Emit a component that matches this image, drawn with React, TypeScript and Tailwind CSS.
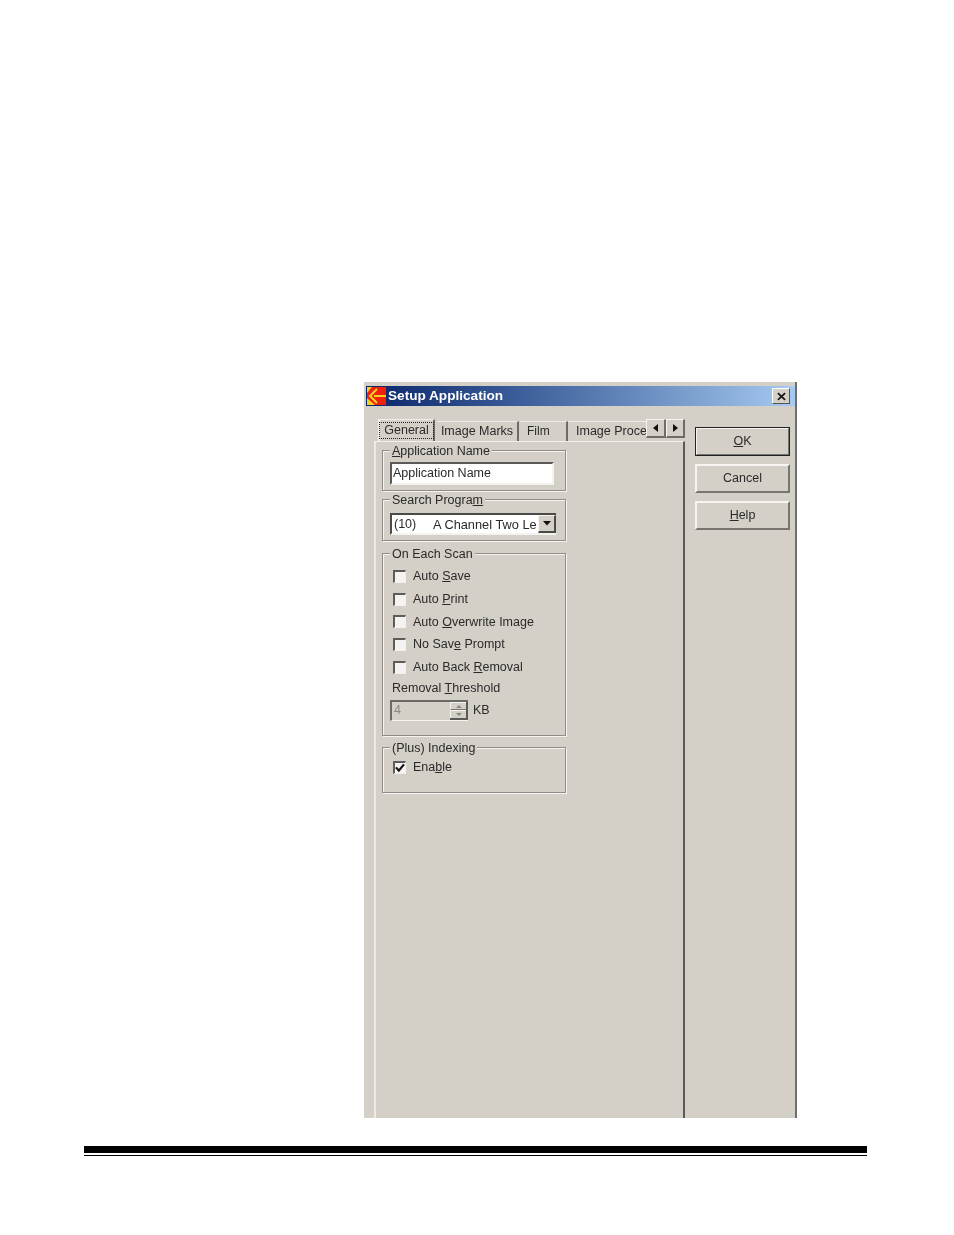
import React from "react";

const Check = ({ checked = false }: { checked?: boolean }) => (
  <span className="flex h-[13px] w-[13px] shrink-0 items-center justify-center border-t-2 border-l-2 border-t-[#5c5c5a] border-l-[#5c5c5a] border-r border-b border-r-[#f2f1ee] border-b-[#f2f1ee] bg-[#f4f3f1]">
    {checked && (
      <svg viewBox="0 0 10 10" className="h-[10px] w-[10px]">
        <path d="M1 4.4 L3.8 7.6 L9 1.4" fill="none" stroke="#111" strokeWidth="2.2" />
      </svg>
    )}
  </span>
);

const Row = ({ children, h = "h-[22.75px]" }: { children: React.ReactNode; h?: string }) => (
  <div className={`ml-[10px] flex items-center gap-[7px] ${h}`}>{children}</div>
);

const Group = ({
  title,
  className,
  children,
}: {
  title: React.ReactNode;
  className: string;
  children?: React.ReactNode;
}) => (
  <div className={`w-[184px] border border-[#8f8d88] shadow-[inset_1px_1px_0_#f4f3f0,1px_1px_0_#f4f3f0] ${className}`}>
    <div className="-mt-[8px] ml-[7px] h-[16px] w-fit bg-[#d4d0c8] px-[2px] leading-[16px] whitespace-nowrap">{title}</div>
    {children}
  </div>
);

const Btn = ({ children, className }: { children: React.ReactNode; className: string }) => (
  <div
    className={`flex h-[29px] w-[95px] items-center justify-center border-t-2 border-l-2 border-t-[#f6f5f2] border-l-[#f6f5f2] border-r-2 border-b-2 border-r-[#77756f] border-b-[#77756f] ${className}`}
  >
    <span>{children}</span>
  </div>
);

const Tab = ({ children, className }: { children: React.ReactNode; className: string }) => (
  <div className={`flex h-[20px] items-center whitespace-nowrap border-t border-t-[#ecebe7] border-r-2 border-r-[#6d6c68] ${className}`}>
    {children}
  </div>
);

export default function App() {
  return (
    <div className="flex h-[1235px] w-[954px] flex-col overflow-hidden bg-white font-['Liberation_Sans',sans-serif] text-[12.5px] text-[#2a2a2a]">
      <div className="mt-[382px] ml-[364px] flex h-[736px] w-[433px] flex-col border-r-2 border-r-[#6e6e6c] bg-[#d4d0c8] pt-[4px] blur-[0.3px]">
        {/* title bar */}
        <div className="ml-[2px] flex h-[20px] w-[429px] items-center bg-gradient-to-r from-[#0a246a] to-[#a6caf0] pr-[5px]">
          <svg viewBox="0 0 19 18" className="ml-[1px] h-[18px] w-[19px] shrink-0">
            <rect width="19" height="18" fill="#f02010" />
            <path d="M0 0H5L0 6Z M0 18H8L0 11Z" fill="#f6d21e" />
            <path d="M10 2 L3 9 L10 16" fill="none" stroke="#f6d21e" strokeWidth="2" />
            <path d="M7 9H19" stroke="#f6d21e" strokeWidth="2" />
          </svg>
          <span className="ml-[2px] text-[13.6px] font-bold whitespace-nowrap text-white">Setup Application</span>
          <div className="ml-auto flex h-[16px] w-[18px] items-center justify-center border-t border-l border-t-white border-l-white border-r border-b border-r-[#555] border-b-[#555] bg-[#d4d0c8]">
            <svg viewBox="0 0 10 10" className="h-[9px] w-[9px]">
              <path d="M1 1.2 L9 8.8 M9 1.2 L1 8.8" stroke="#111" strokeWidth="1.8" />
            </svg>
          </div>
        </div>

        {/* body */}
        <div className="flex min-h-0 flex-1 pt-[13px] pl-[10px]">
          <div className="flex w-[311px] flex-col">
            {/* tabs */}
            <div className="flex h-[22px] items-start pl-[4px]">
              <div className="flex h-[22px] w-[57px] items-center justify-center border-t border-l-2 border-t-[#f1f0ec] border-l-[#f1f0ec] border-r-2 border-r-[#6d6c68]">
                <span className="border border-dotted border-[#222] px-[4px] leading-[15px]">General</span>
              </div>
              <Tab className="mt-[2px] ml-[2px] w-[82px] justify-center">Image Marks</Tab>
              <Tab className="mt-[2px] ml-[1px] w-[48px] pl-[7px]"><span className="-mt-[1px] text-[12px]">Film</span></Tab>
              <div className="mt-[2px] flex h-[20px] w-[78px] items-center border-t border-t-[#ecebe7] pl-[8px] whitespace-nowrap">
                Image Proce
              </div>
              <div className="flex h-[19px] w-[20px] items-center justify-center border-t border-l border-t-[#f6f5f2] border-l-[#f6f5f2] border-r-2 border-b-2 border-r-[#6d6c68] border-b-[#6d6c68]">
                <svg viewBox="0 0 5 8" className="h-[8px] w-[5px]"><path d="M5 0V8L0 4Z" fill="#111" /></svg>
              </div>
              <div className="flex h-[19px] w-[19px] items-center justify-center border-t border-l border-t-[#f6f5f2] border-l-[#f6f5f2] border-r-2 border-b-2 border-r-[#6d6c68] border-b-[#6d6c68]">
                <svg viewBox="0 0 5 8" className="h-[8px] w-[5px]"><path d="M0 0V8L5 4Z" fill="#111" /></svg>
              </div>
            </div>

            {/* pane */}
            <div className="min-h-0 flex-1 border-t border-l-2 border-t-[#f1f0ec] border-l-[#ecebe7] border-r-2 border-r-[#5a5a58] pt-[8px] pl-[6px]">
              <Group className="h-[41px]" title={<><u>A</u>pplication Name</>}>
                <div className="mt-[3px] ml-[7px] flex h-[23px] w-[164px] items-center border-t-2 border-l-2 border-t-[#5a5a58] border-l-[#5a5a58] border-r-2 border-b-2 border-r-[#f4f3f0] border-b-[#f4f3f0] bg-white pl-[1px] whitespace-nowrap">
                  Application Name
                </div>
              </Group>

              <Group className="mt-[8px] h-[42px]" title={<>Search Progra<u>m</u></>}>
                <div className="mt-[5px] ml-[7px] flex h-[22px] w-[166px] items-center border-t-2 border-l-2 border-t-[#4a4a48] border-l-[#4a4a48] border-b-2 border-b-[#f4f3f0] bg-white pl-[2px] whitespace-nowrap">
                  <span className="mt-[1px] w-[39px]">(10)</span>
                  <span className="mt-[1px] w-[105px] text-[12.8px]">A Channel Two Le</span>
                  <div className="flex h-[18px] w-[18px] shrink-0 items-center justify-center border-t border-l border-t-[#f6f5f2] border-l-[#f6f5f2] border-r-2 border-b-2 border-r-[#4a4a48] border-b-[#4a4a48] bg-[#d4d0c8]">
                    <svg viewBox="0 0 8 5" className="h-[5px] w-[8px]"><path d="M0 0H8L4 4.5Z" fill="#111" /></svg>
                  </div>
                </div>
              </Group>

              <Group className="mt-[12px] h-[183px]" title="On Each Scan">
                <div className="mt-[3px] mb-[1px]">
                  <Row><Check /><span>Auto <u>S</u>ave</span></Row>
                  <Row><Check /><span>Auto <u>P</u>rint</span></Row>
                  <Row><Check /><span>Auto <u>O</u>verwrite Image</span></Row>
                  <Row><Check /><span>No Sav<u>e</u> Prompt</span></Row>
                  <Row><Check /><span>Auto Back <u>R</u>emoval</span></Row>
                </div>
                <div className="ml-[9px] h-[16px] leading-[16px]">Removal <u>T</u>hreshold</div>
                <div className="mt-[4px] ml-[7px] flex items-center">
                  <div className="flex h-[21px] w-[78px] items-center border-t-2 border-l-2 border-t-[#6a6a68] border-l-[#6a6a68] border-b border-b-[#f4f3f0] pl-[2px] text-[#8a8883]">
                    <span className="flex-1">4</span>
                    <div className="flex h-[18px] w-[18px] flex-col border-r-2 border-b-2 border-r-[#5a5a58] border-b-[#5a5a58]">
                      <div className="flex flex-1 items-center justify-center border-t border-l border-t-[#f6f5f2] border-l-[#f6f5f2] border-b border-b-[#77756f]">
                        <svg viewBox="0 0 6 3" className="h-[3px] w-[6px]"><path d="M0 3H6L3 0Z" fill="#8a8883" /></svg>
                      </div>
                      <div className="flex flex-1 items-center justify-center border-t border-l border-t-[#f6f5f2] border-l-[#f6f5f2]">
                        <svg viewBox="0 0 6 3" className="h-[3px] w-[6px]"><path d="M0 0H6L3 3Z" fill="#8a8883" /></svg>
                      </div>
                    </div>
                  </div>
                  <span className="ml-[5px]">KB</span>
                </div>
              </Group>

              <Group className="mt-[11px] h-[46px]" title="(Plus) Indexing">
                <Row h="h-[22px]"><Check checked /><span>Ena<u>b</u>le</span></Row>
              </Group>
            </div>
          </div>

          {/* buttons */}
          <div className="ml-[10px] flex flex-col pt-[8px]">
            <Btn className="outline outline-1 -outline-offset-1 outline-[#222]"><u>O</u>K</Btn>
            <Btn className="mt-[8px]">Cancel</Btn>
            <Btn className="mt-[8px]"><u>H</u>elp</Btn>
          </div>
        </div>
      </div>

      {/* footer rule */}
      <div className="mt-[28px] ml-[84px] h-[7px] w-[783px] bg-black" />
      <div className="mt-[2px] ml-[84px] h-px w-[783px] bg-black" />
    </div>
  );
}
